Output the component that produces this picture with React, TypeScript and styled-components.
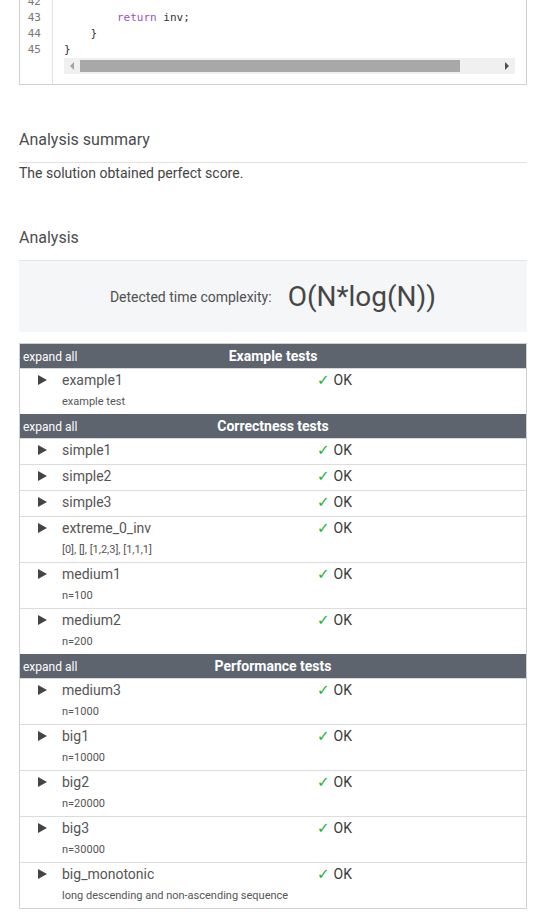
import React from 'react';
import styled, { createGlobalStyle } from 'styled-components';

const GlobalStyle = createGlobalStyle`
  html, body {
    margin: 0;
    padding: 0;
    background: #ffffff;
    font-family: Roboto, "Liberation Sans", Arial, sans-serif;
    color: #4a4a4a;
    overflow: hidden;
  }
`;

const Page = styled.div`
  width: 508px;
  padding: 0 14px 0 19px;
`;

const CodeBox = styled.div`
  margin-top: -7px;
  border: 1px solid #cfcfcf;
  display: flex;
  background: #fff;
`;

const Gutter = styled.div`
  width: 33px;
  border-right: 1px solid #e4e4e4;
  box-sizing: border-box;
  font-family: "DejaVu Sans Mono", "Liberation Mono", monospace;
  font-size: 11px;
  line-height: 16px;
  color: #777;
  text-align: right;
`;

const LineNo = styled.div`
  padding-right: 11px;
`;

const CodeArea = styled.div`
  flex: 1;
  padding: 0 11px 10px 11px;
  font-family: "DejaVu Sans Mono", "Liberation Mono", monospace;
  font-size: 11px;
  line-height: 16px;
  color: #333;
  white-space: pre;
`;

const Keyword = styled.span`
  color: #a150c0;
`;

const ScrollTrack = styled.div`
  height: 16px;
  background: #f0f0f0;
  display: flex;
  align-items: center;
  padding: 0 6px;
  gap: 6px;
`;

const Arrow = styled.div<{ $dir: 'left' | 'right'; $dark?: boolean }>`
  width: 0;
  height: 0;
  border-top: 4px solid transparent;
  border-bottom: 4px solid transparent;
  ${p => (p.$dir === 'left' ? 'border-right' : 'border-left')}: 4px solid ${p => (p.$dark ? '#505050' : '#a3a3a3')};
`;

const Thumb = styled.div`
  height: 12px;
  width: 380px;
  background: #a8a8a8;
`;

const Spacer = styled.div`
  flex: 1;
`;

const SectionTitle = styled.h2<{ $ruled?: boolean }>`
  margin: 43px 0 0 0;
  font-size: 16px;
  font-weight: 400;
  line-height: 24px;
  color: #4d4d4d;
  padding-bottom: ${p => (p.$ruled ? '10px' : '9px')};
  border-bottom: 1px solid ${p => (p.$ruled ? '#e2e2e2' : 'transparent')};
`;

const Summary = styled.p`
  margin: 0;
  font-size: 14px;
  line-height: 20px;
  color: #444;
`;

const ComplexityBox = styled.div`
  height: 71px;
  border-top: 1px solid #e3e5e8;
  background: #f5f6f8;
  display: flex;
  align-items: center;
  justify-content: center;
  gap: 16px;
`;

const ComplexityLabel = styled.span`
  font-size: 14px;
  color: #505050;
`;

const ComplexityValue = styled.span`
  font-size: 28px;
  color: #464646;
`;

const Table = styled.div`
  margin-top: 11px;
  border: 1px solid #d0d0d0;
`;

const GroupHeader = styled.div`
  height: 24px;
  background: #5d646d;
  color: #fff;
  display: flex;
  align-items: center;
  border-bottom: 1px solid #d8d8d8;
`;

const ExpandAll = styled.span`
  font-size: 12px;
  padding-left: 3px;
  width: 120px;
  padding-top: 2px;
`;

const GroupTitle = styled.span`
  flex: 1;
  text-align: center;
  font-size: 14px;
  font-weight: 700;
  margin-left: -123px;
`;

const Row = styled.div<{ $last: boolean }>`
  display: grid;
  grid-template-columns: 42px 255px 1fr;
  align-items: start;
  padding: 1px 0 4px 0;
  border-bottom: ${p => (p.$last ? 'none' : '1px solid #dcdcdc')};
`;

const Toggle = styled.div`
  height: 20px;
  display: flex;
  align-items: center;
  justify-content: flex-end;
  padding-right: 15px;
`;

const Triangle = styled.div`
  width: 0;
  height: 0;
  border-top: 5px solid transparent;
  border-bottom: 5px solid transparent;
  border-left: 9px solid #444;
`;

const NameCell = styled.div`
  display: flex;
  flex-direction: column;
`;

const TestName = styled.span`
  font-size: 14px;
  line-height: 20px;
  height: 20px;
  color: #555;
`;

const TestNote = styled.span`
  font-size: 11px;
  line-height: 16px;
  height: 16px;
  padding-top: 4px;
  color: #555;
`;

const Status = styled.div`
  height: 20px;
  display: flex;
  align-items: center;
  font-size: 14px;
  color: #3a3a3a;
`;

const Check = styled.span`
  color: #22b422;
  margin-right: 4px;
  font-family: "DejaVu Sans", sans-serif;
  font-size: 15px;
  line-height: 1;
`;

type Test = { name: string; note?: string };

const groups: { title: string; tests: Test[] }[] = [
  { title: 'Example tests', tests: [{ name: 'example1', note: 'example test' }] },
  {
    title: 'Correctness tests',
    tests: [
      { name: 'simple1' },
      { name: 'simple2' },
      { name: 'simple3' },
      { name: 'extreme_0_inv', note: '[0], [], [1,2,3], [1,1,1]' },
      { name: 'medium1', note: 'n=100' },
      { name: 'medium2', note: 'n=200' },
    ],
  },
  {
    title: 'Performance tests',
    tests: [
      { name: 'medium3', note: 'n=1000' },
      { name: 'big1', note: 'n=10000' },
      { name: 'big2', note: 'n=20000' },
      { name: 'big3', note: 'n=30000' },
      { name: 'big_monotonic', note: 'long descending and non-ascending sequence' },
    ],
  },
];

export default function App() {
  return (
    <>
      <GlobalStyle />
      <Page>
        <CodeBox>
          <Gutter>
            {[42, 43, 44, 45].map(n => (
              <LineNo key={n}>{n}</LineNo>
            ))}
          </Gutter>
          <CodeArea>
            <div> </div>
            <div>
              {'        '}
              <Keyword>return</Keyword> inv;
            </div>
            <div>{'    }'}</div>
            <div>{'}'}</div>
            <ScrollTrack>
              <Arrow $dir="left" />
              <Thumb />
              <Spacer />
              <Arrow $dir="right" $dark />
            </ScrollTrack>
          </CodeArea>
        </CodeBox>

        <SectionTitle $ruled>Analysis summary</SectionTitle>
        <Summary>The solution obtained perfect score.</Summary>

        <SectionTitle>Analysis</SectionTitle>
        <ComplexityBox>
          <ComplexityLabel>Detected time complexity:</ComplexityLabel>
          <ComplexityValue>O(N*log(N))</ComplexityValue>
        </ComplexityBox>

        <Table>
          {groups.map(g => (
            <React.Fragment key={g.title}>
              <GroupHeader>
                <ExpandAll>expand all</ExpandAll>
                <GroupTitle>{g.title}</GroupTitle>
              </GroupHeader>
              {g.tests.map((t, i) => (
                <Row key={t.name} $last={i === g.tests.length - 1}>
                  <Toggle>
                    <Triangle />
                  </Toggle>
                  <NameCell>
                    <TestName>{t.name}</TestName>
                    {t.note && <TestNote>{t.note}</TestNote>}
                  </NameCell>
                  <Status>
                    <Check>✓</Check>OK
                  </Status>
                </Row>
              ))}
            </React.Fragment>
          ))}
        </Table>
      </Page>
    </>
  );
}
